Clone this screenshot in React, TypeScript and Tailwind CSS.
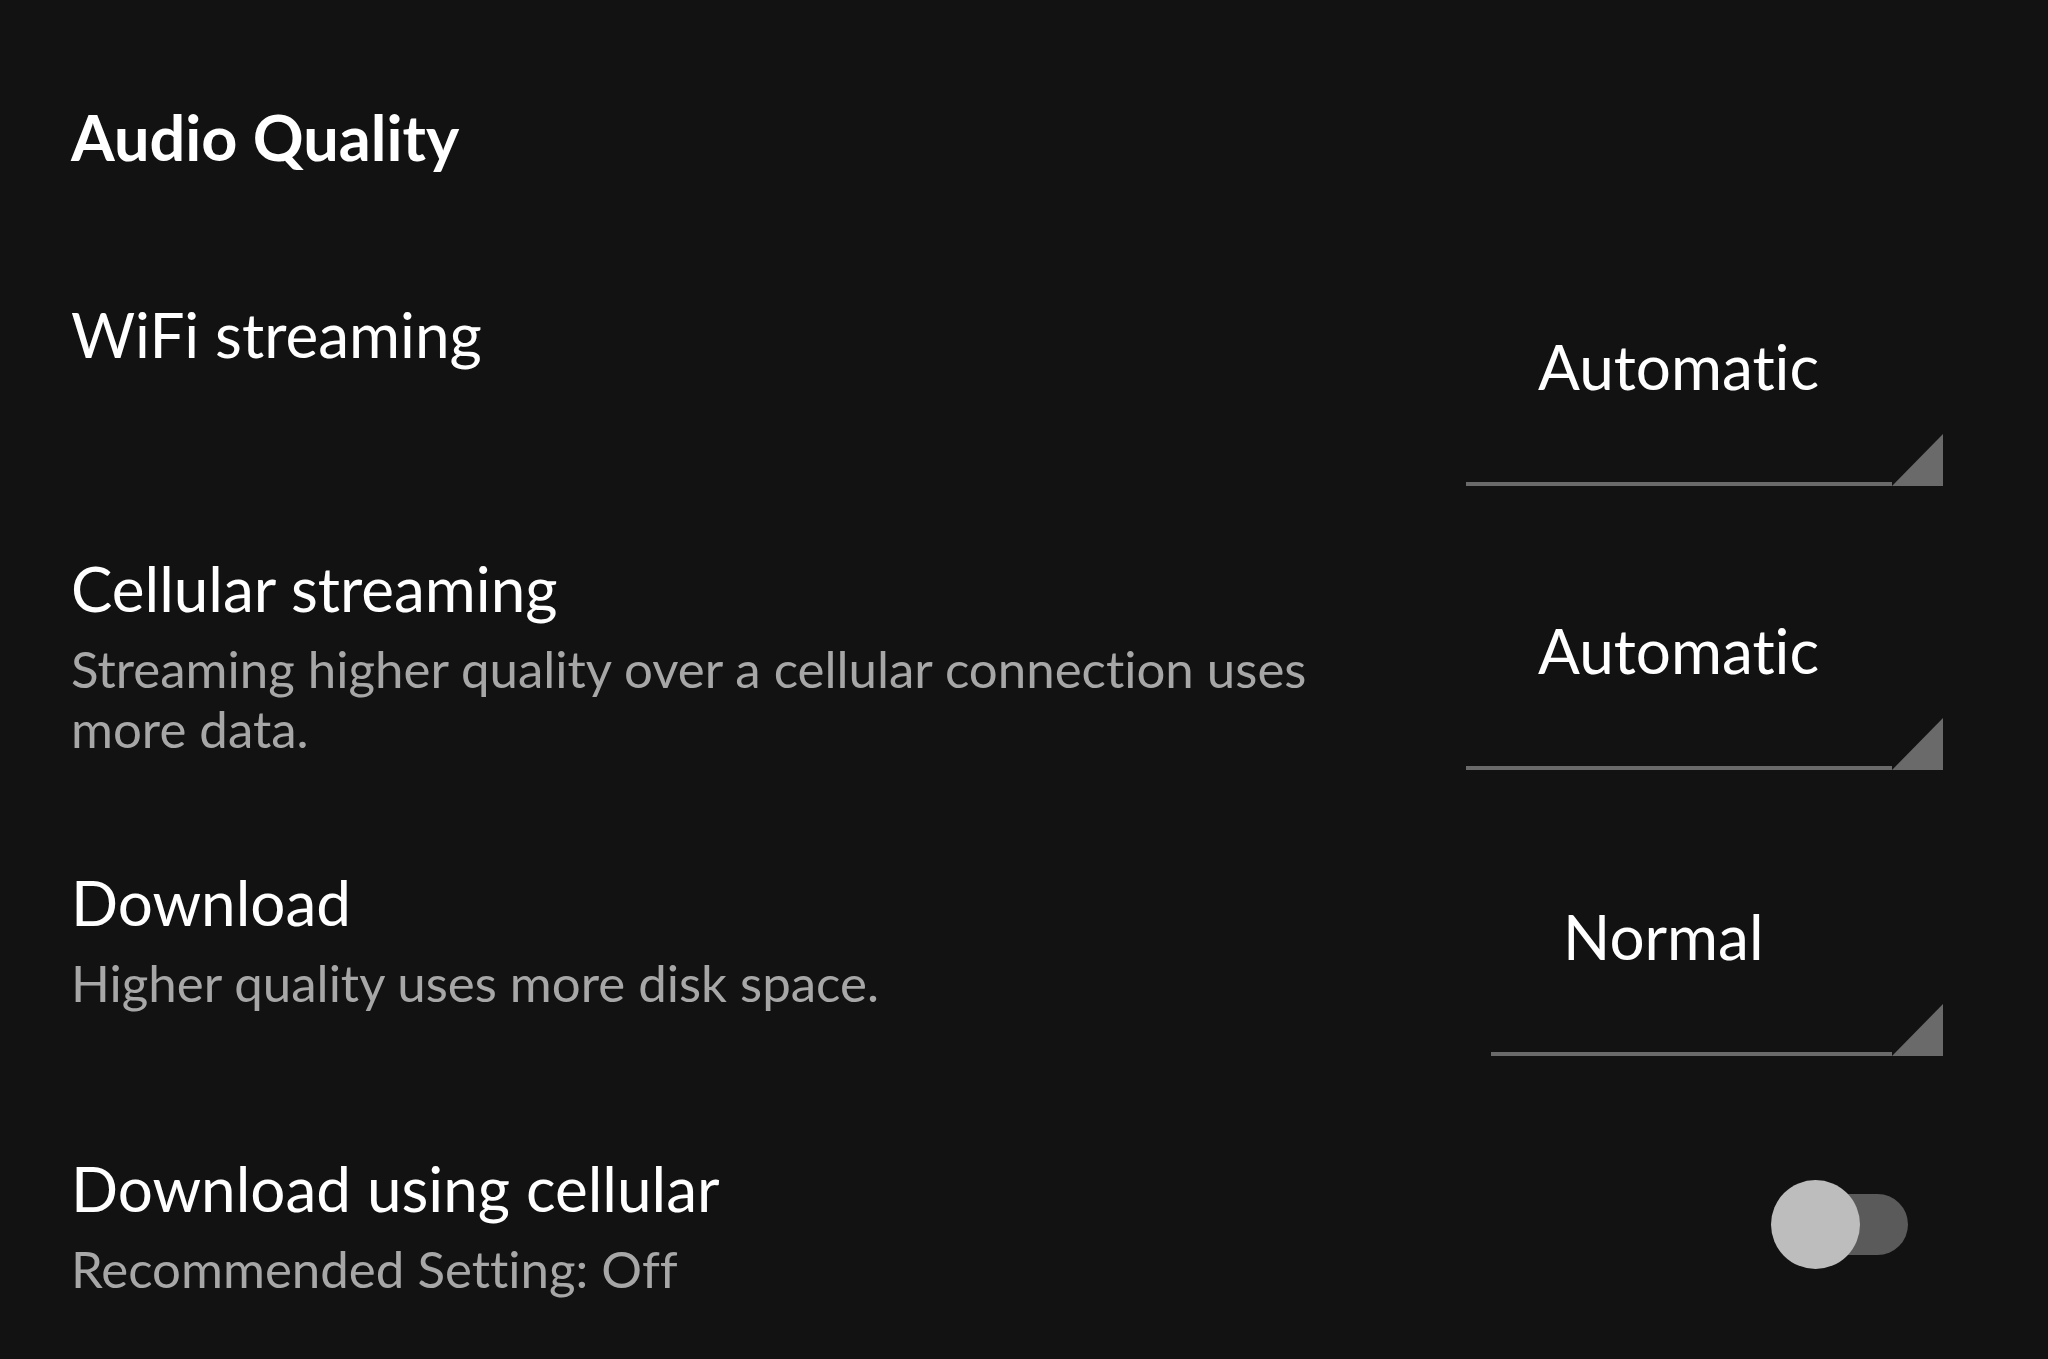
const labelCls = "text-[62px] leading-[72px] text-white"
const descCls = "mt-[15px] text-[51px] leading-[60px] text-[#a7a7a7]"

function Spinner({ value, width }: { value: string; width: string }) {
  return (
    <div className={`flex flex-col ${width}`}>
      <span className="pl-[72px] text-[62px] leading-[72px] text-white">{value}</span>
      <div className="mt-[32px] flex h-[52px] items-end">
        <div className="h-[4px] flex-1 bg-[#6a6a6a]" />
        <svg width="51" height="52" viewBox="0 0 51 52" className="block">
          <polygon points="0,52 51,0 51,52" fill="#6a6a6a" />
        </svg>
      </div>
    </div>
  )
}

function Toggle() {
  return (
    <div className="relative mr-[35px] h-[89px] w-[137px]">
      <div className="absolute left-[15px] top-[14px] h-[61px] w-[122px] rounded-full bg-[#5a5a5a]" />
      <div className="absolute left-0 top-0 h-[89px] w-[89px] rounded-full bg-[#bdbdbd]" />
    </div>
  )
}

export default function App() {
  return (
    <div
      className="min-h-screen bg-[#121212] pl-[71px] pr-[105px] pt-[101px] [font-variant-ligatures:none]"
      style={{ fontFamily: "Lato, 'Noto Sans', sans-serif" }}
    >
      <h1 className="text-[63px] font-bold leading-[72px] text-white">Audio Quality</h1>

      {/* WiFi */}
      <div className="mt-[125px] flex items-start justify-between">
        <div className={labelCls}>WiFi streaming</div>
        <div className="mt-[32px]">
          <Spinner value="Automatic" width="w-[477px]" />
        </div>
      </div>

      {/* Cellular */}
      <div className="mt-[66px] flex items-start justify-between">
        <div className="w-[1290px]">
          <div className={labelCls}>Cellular streaming</div>
          <p className={descCls}>Streaming higher quality over a cellular connection uses more data.</p>
        </div>
        <div className="mt-[62px]">
          <Spinner value="Automatic" width="w-[477px]" />
        </div>
      </div>

      {/* Download */}
      <div className="mt-[96px] flex items-start justify-between">
        <div>
          <div className={labelCls}>Download</div>
          <p className={descCls}>Higher quality uses more disk space.</p>
        </div>
        <div className="mt-[34px]">
          <Spinner value="Normal" width="w-[452px]" />
        </div>
      </div>

      {/* Download using cellular */}
      <div className="mt-[96px] flex items-start justify-between">
        <div>
          <div className={labelCls}>Download using cellular</div>
          <p className={descCls}>Recommended Setting: Off</p>
        </div>
        <div className="mt-[28px]">
          <Toggle />
        </div>
      </div>
    </div>
  )
}
